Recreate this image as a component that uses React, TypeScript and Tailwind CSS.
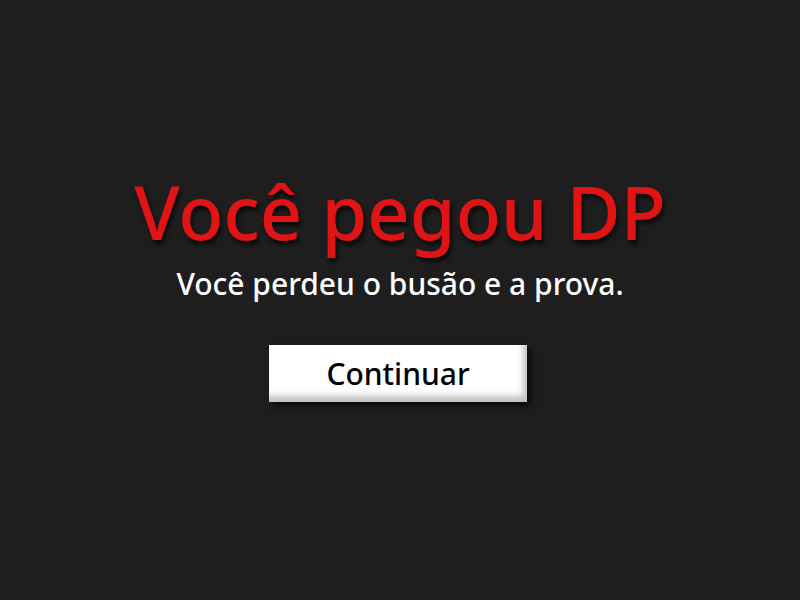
export default function App() {
  return (
    <div className="flex h-[600px] w-[800px] flex-col items-center bg-[#1e1e1e] pt-[168px] font-['Noto_Sans',sans-serif]">
      <h1 className="text-[74px] font-medium leading-[88px] text-[#e01414] [text-shadow:2px_4px_4px_rgba(0,0,0,0.7)]">
        Você pegou DP
      </h1>
      <p className="mt-[9px] text-[30px] font-medium leading-[38px] text-white">
        Você perdeu o busão e a prova.
      </p>
      <button className="mt-[42px] mr-[4px] flex h-[57px] w-[258px] items-center justify-center bg-white text-[30px] font-medium text-black shadow-[inset_-4px_-6px_6px_rgba(0,0,0,0.25),4px_4px_6px_rgba(0,0,0,0.7)]">
        Continuar
      </button>
    </div>
  );
}
